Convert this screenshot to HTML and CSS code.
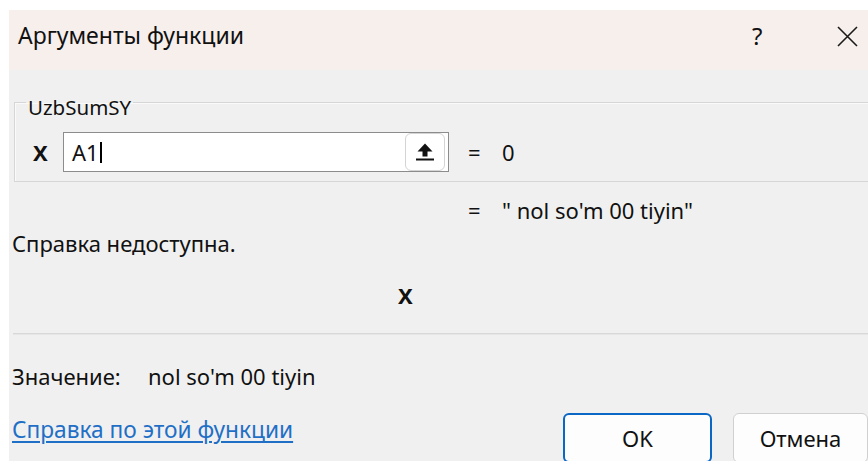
FILE: index.html
```html
<!DOCTYPE html>
<html lang="ru">
<head>
<meta charset="utf-8">
<title>Аргументы функции</title>
<link rel="stylesheet" href="styles.css">
</head>
<body>
<div class="dialog">
  <header class="titlebar">
    <span class="title">Аргументы функции</span>
    <span class="help">?</span>
    <svg class="close" width="21" height="21" viewBox="0 0 21 21" aria-hidden="true">
      <path d="M1 1 L20 20 M20 1 L1 20" stroke="#1a1a1a" stroke-width="1.6" fill="none"/>
    </svg>
  </header>

  <main class="content">
    <fieldset class="args">
      <legend>UzbSumSY</legend>
      <div class="arg-row">
        <span class="arg-name">X</span>
        <div class="field">
          <span class="field-text">A1<span class="caret"></span></span>
          <button class="collapse" type="button" aria-label="Свернуть">
            <svg width="20" height="18" viewBox="0 0 20 18" aria-hidden="true">
              <path d="M10 0.5 L2.5 8.5 H7.5 V13.5 H12.5 V8.5 H17.5 Z" fill="#111"/>
              <rect x="1" y="15.5" width="18" height="2" fill="#111"/>
            </svg>
          </button>
        </div>
        <span class="eq">=</span>
        <span class="val">0</span>
      </div>
    </fieldset>

    <div class="result-row">
      <span class="eq">=</span>
      <span class="val">" nol so'm 00 tiyin"</span>
    </div>

    <p class="desc">Справка недоступна.</p>
    <p class="arg-desc">X</p>

    <hr class="sep">

    <p class="value-line"><span class="value-label">Значение:</span>nol so'm 00 tiyin</p>

    <footer class="footer">
      <a class="help-link" href="#">Справка по этой функции</a>
      <div class="buttons">
        <button class="btn btn-ok" type="button">OK</button>
        <button class="btn btn-cancel" type="button">Отмена</button>
      </div>
    </footer>
  </main>
</div>
</body>
</html>
```

FILE: styles.css
```css
html, body {
  margin: 0;
  padding: 0;
  background: #ffffff;
  overflow: hidden;
}

body {
  width: 868px;
  height: 461px;
  font-family: "Noto Sans", "Open Sans", "DejaVu Sans", sans-serif;
  font-size: 22px;
  line-height: 26px;
  color: #111111;
}

.dialog {
  margin: 10px 0 0 9px;
  height: 451px;
  overflow: hidden;
  background: #f0f0f0;
}

/* title bar */
.titlebar {
  height: 60px;
  box-sizing: border-box;
  padding: 12px 0 0 9px;
  background: #f7efec;
  display: flex;
  align-items: flex-start;
}

.title {
  flex: 1;
  font-size: 23px;
}

.help {
  font-size: 24px;
  margin-top: 1px;
  width: 85px;
}

.close {
  margin: 4px 10px 0 0;
}

/* body */
.content {
  padding: 0 0 0 3px;
}

.args {
  margin: 14px 0 0 2px;
  width: 900px;
  padding: 12px 0 9px 0;
  border: 1px solid #d6d6d6;
  box-shadow: inset 1px 1px 0 #fafafa;
  min-width: 0;
}

.args legend {
  margin-left: 11px;
  padding: 10px 2px 0 2px;
  font-size: 20.5px;
}

.arg-row {
  display: flex;
  align-items: center;
  height: 40px;
}

.arg-name {
  font-weight: 700;
  width: 30px;
  padding-left: 18px;
}

.field {
  width: 386px;
  height: 40px;
  box-sizing: border-box;
  border: 1px solid #8c8c8c;
  background: #ffffff;
  display: flex;
  align-items: center;
  padding: 0 3px 0 8px;
}

.field-text {
  flex: 1;
  display: flex;
  align-items: center;
}

.caret {
  display: inline-block;
  width: 2px;
  height: 21px;
  background: #000;
  margin-left: 1px;
}

.collapse {
  width: 40px;
  height: 38px;
  border: 1px solid #d4d4d4;
  border-radius: 6px;
  background: #ffffff;
  padding: 0;
  display: flex;
  align-items: center;
  justify-content: center;
}

.eq {
  width: 34px;
  margin-left: 19px;
}

.result-row {
  display: flex;
  margin-top: 15px;
  padding-left: 437px;
}

.result-row .eq {
  margin-left: 19px;
}

p {
  margin: 0;
}

.desc {
  margin-top: 7px;
}

.arg-desc {
  margin-top: 26px;
  padding-left: 386px;
  font-weight: 700;
}

.sep {
  margin: 25px 0 0 1px;
  border: 0;
  height: 1px;
  background: #d8d8d8;
  box-shadow: 0 1px 0 #e6e6e6;
}

.value-line {
  margin-top: 29px;
}

.value-label {
  display: inline-block;
  width: 136px;
}

.footer {
  margin-top: 24px;
  display: flex;
  align-items: flex-start;
}

.help-link {
  margin-top: 4px;
  flex: 1;
  font-size: 22.7px;
  color: #1f6fc6;
  text-decoration: underline;
  text-underline-offset: 3px;
}

.buttons {
  display: flex;
  gap: 21px;
}

.btn {
  font: inherit;
  color: #111;
  height: 50px;
  box-sizing: border-box;
  background: #fdfdfd;
  border-radius: 6px;
  padding: 0;
}

.btn-ok {
  width: 149px;
  border: 2px solid #0a67c4;
}

.btn-cancel {
  width: 135px;
  border: 1px solid #d0d0d0;
}
```
